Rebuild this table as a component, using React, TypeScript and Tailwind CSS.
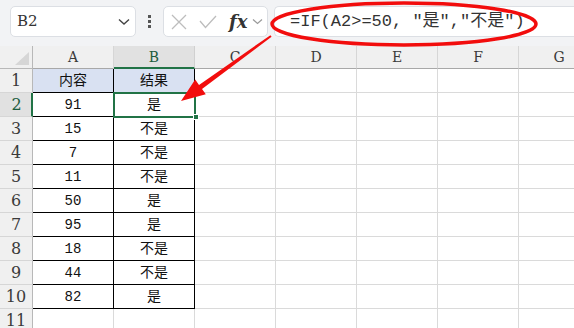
import React from 'react';

const cols = ['A', 'B', 'C', 'D', 'E', 'F', 'G'];

const data: [string, string][] = [
  ['内容', '结果'],
  ['91', '是'],
  ['15', '不是'],
  ['7', '不是'],
  ['11', '不是'],
  ['50', '是'],
  ['95', '是'],
  ['18', '不是'],
  ['44', '不是'],
  ['82', '是'],
];

const cellFont = { fontFamily: "'Liberation Mono','Noto Sans CJK SC',monospace" };
const serif = { fontFamily: "'DejaVu Serif','Liberation Serif',serif" };

function Toolbar() {
  return (
    <div className="flex h-[46px] items-start bg-[#f2f3f5] pt-[6px]">
      {/* name box */}
      <div className="ml-[10px] flex h-[31px] w-[126px] items-center justify-between rounded-[5px] border border-[#dcdfe4] bg-white pl-[6px] pr-[5px]">
        <span className="text-[15px] text-[#333]" style={serif}>B2</span>
        <svg width="12" height="8" viewBox="0 0 12 8">
          <path d="M1 1.5 L6 6 L11 1.5" fill="none" stroke="#444" strokeWidth="1.4" />
        </svg>
      </div>
      {/* dots */}
      <div className="ml-[12px] mr-[12px] flex h-[31px] flex-col items-center justify-center gap-[2px]">
        <span className="h-[3px] w-[3px] bg-[#555]" />
        <span className="h-[3px] w-[3px] bg-[#555]" />
        <span className="h-[3px] w-[3px] bg-[#555]" />
      </div>
      {/* function box */}
      <div className="flex h-[31px] w-[105px] items-center rounded-[5px] border border-[#dcdfe4] bg-white pl-[7px]">
        <svg width="16" height="16" viewBox="0 0 16 16">
          <path d="M1 1 L15 15 M15 1 L1 15" stroke="#bdbdbd" strokeWidth="1.3" />
        </svg>
        <svg width="18" height="14" viewBox="0 0 18 14" className="ml-[12px]">
          <path d="M1 6 L6.5 12.5 L17 1" fill="none" stroke="#bdbdbd" strokeWidth="1.3" />
        </svg>
        <span className="ml-[12px] text-[18px] font-bold italic leading-none text-[#333]" style={serif}>fx</span>
        <svg width="11" height="7" viewBox="0 0 11 7" className="ml-[5px]">
          <path d="M1 1.5 L5.5 5.5 L10 1.5" fill="none" stroke="#9a9a9a" strokeWidth="1.2" />
        </svg>
      </div>
      {/* formula */}
      <div className="ml-[6px] flex h-[31px] flex-1 items-center rounded-l-[5px] border border-r-0 border-[#dcdfe4] bg-white pl-[15px]">
        <span className="whitespace-pre text-[17px] text-[#333]" style={cellFont}>
          =IF(A2&gt;=50, "是","不是")
        </span>
      </div>
    </div>
  );
}

function HeaderRow() {
  return (
    <div className="flex h-[23px]">
      <div className="relative box-border h-[23px] w-[33px] shrink-0 border-r border-b border-[#b8b8b8] bg-[#f0f0f0]">
        <svg width="14" height="13" viewBox="0 0 14 13" className="absolute right-[3px] bottom-[3px]">
          <path d="M14 0 L14 13 L0 13 Z" fill="#d6d6d6" />
        </svg>
      </div>
      {cols.map((c) => {
        const sel = c === 'B';
        return (
          <div
            key={c}
            className={
              sel
                ? 'box-border flex h-[23px] w-[81px] shrink-0 items-center justify-center border-r border-b-2 border-r-[#d0d0d0] border-b-[#217346] bg-[#e1e1e1] pt-[1px] text-[14px] text-[#1d5c3e]'
                : 'box-border flex h-[23px] w-[81px] shrink-0 items-center justify-center border-r border-b border-r-[#d6d6d6] border-b-[#a8a8a8] bg-[#f0f0f0] text-[14px] text-[#3a3a3a]'
            }
            style={serif}
          >
            {c}
          </div>
        );
      })}
    </div>
  );
}

function Row({ n }: { n: number }) {
  const row = data[n - 1];
  const sel = n === 2;
  return (
    <div className="flex h-6">
      <div
        className={
          sel
            ? 'box-border flex h-6 w-[33px] shrink-0 items-center justify-center border-r-2 border-b border-r-[#217346] border-b-[#d6d6d6] bg-[#e1e1e1] pl-[2px] pt-[1px] text-[16px] text-[#1d5c3e]'
            : 'box-border flex h-6 w-[33px] shrink-0 items-center justify-center border-r border-b border-r-[#b8b8b8] border-b-[#d6d6d6] bg-[#f0f0f0] pt-[1px] text-[16px] text-[#3a3a3a]'
        }
        style={serif}
      >
        {n}
      </div>
      {cols.map((c, i) => {
        const inData = row && i < 2;
        const fill = n === 1 && i < 2 ? 'bg-[#d9e1f2]' : 'bg-white';
        return (
          <div
            key={c}
            className={
              inData
                ? `box-border flex h-6 w-[81px] shrink-0 items-center justify-center border-r border-b border-black pt-[2px] text-[14px] text-[#111] ${fill}`
                : 'box-border h-6 w-[81px] shrink-0 border-r border-b border-[#dadada] bg-white'
            }
            style={cellFont}
          >
            {inData ? row[i] : null}
          </div>
        );
      })}
    </div>
  );
}

export default function App() {
  return (
    <div className="relative h-[328px] w-[574px] overflow-hidden bg-white">
      <Toolbar />
      <HeaderRow />
      {Array.from({ length: 11 }, (_, i) => (
        <Row key={i} n={i + 1} />
      ))}

      {/* active cell B2 */}
      <div className="pointer-events-none absolute left-[113px] top-[92px] h-[26px] w-[83px] border-2 border-[#217346]" />
      <div className="pointer-events-none absolute left-[193px] top-[114px] h-[6px] w-[6px] border border-white bg-[#217346]" />

      {/* annotation */}
      <svg className="pointer-events-none absolute left-0 top-0" width="574" height="328">
        <ellipse cx="404" cy="24" rx="132" ry="21" fill="none" stroke="#f20d0d" strokeWidth="3.5" />
        <polygon
          points="271.6,36.8 202,88.9 205.8,94.2 181,101 195.2,79.6 199,84.9 270.4,35.2"
          fill="#f20d0d"
        />
      </svg>
    </div>
  );
}
